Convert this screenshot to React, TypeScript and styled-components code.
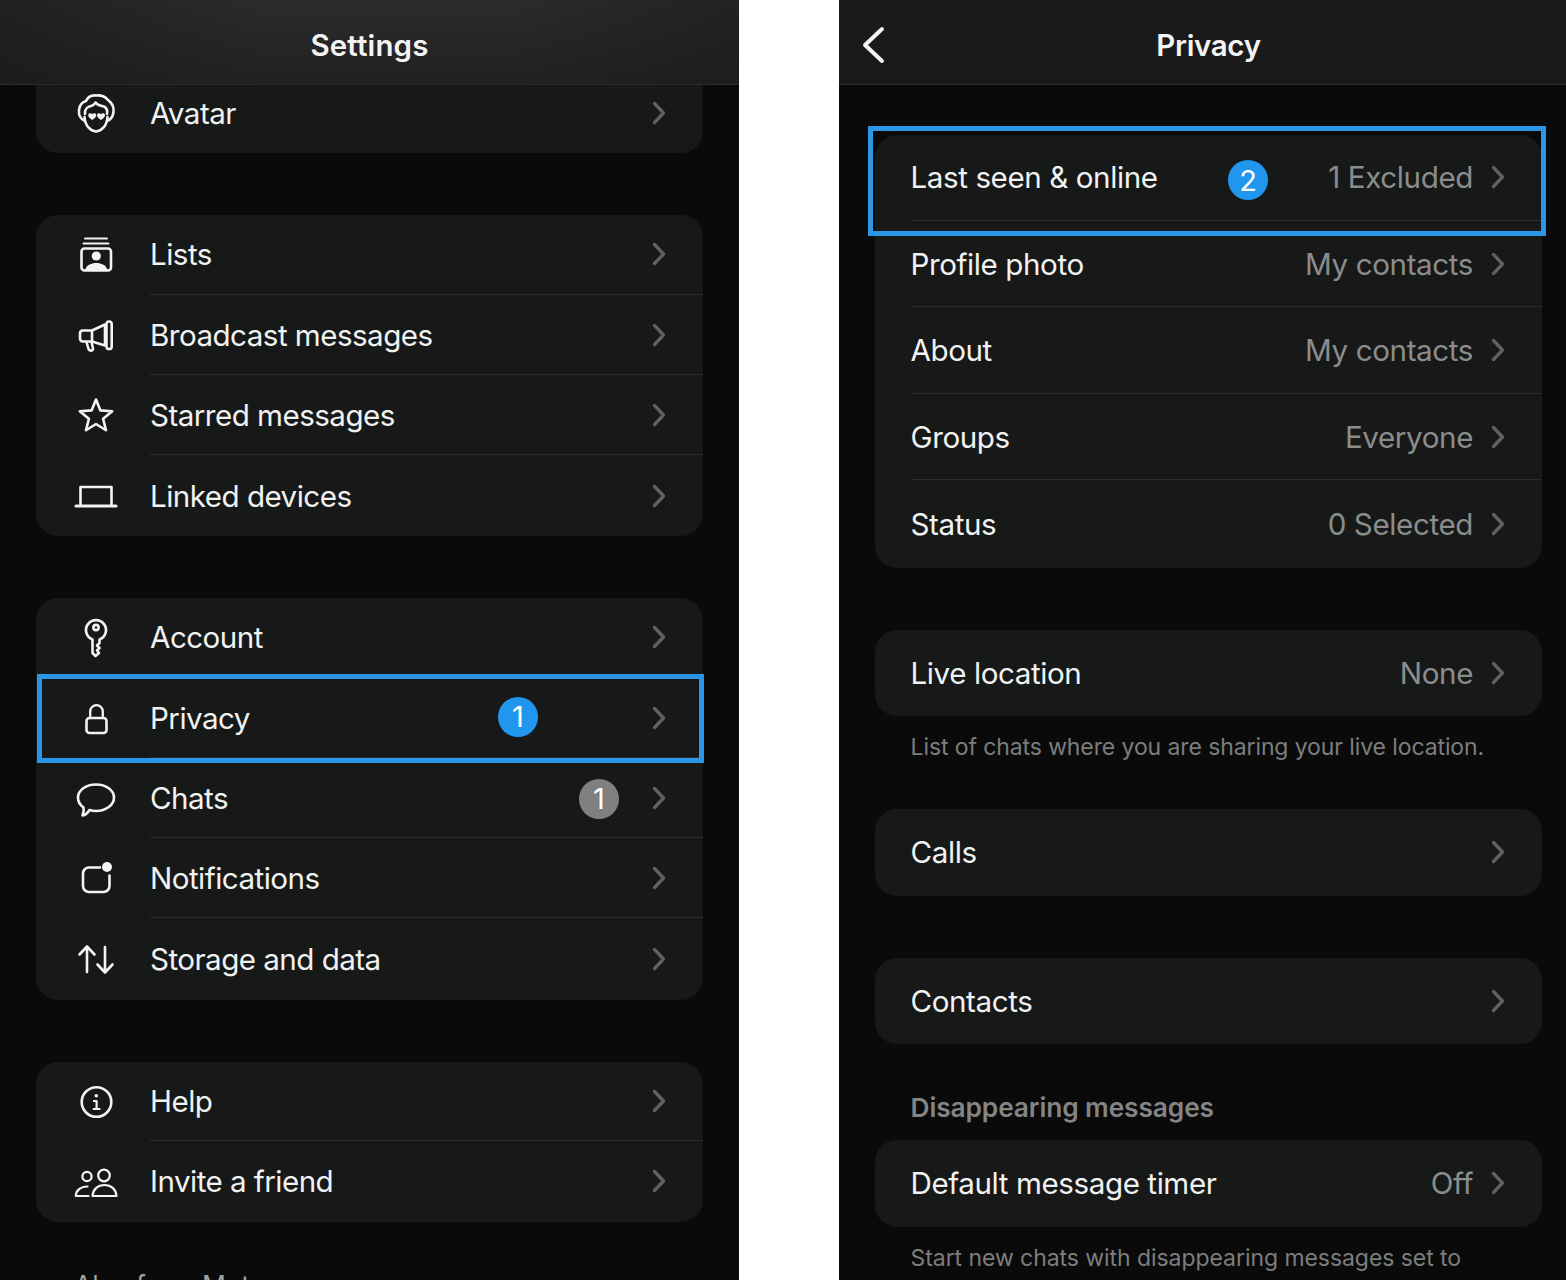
import React from "react"
import styled, { createGlobalStyle } from "styled-components"

const GlobalStyle = createGlobalStyle`
  html, body {
    margin: 0;
    padding: 0;
    background: #ffffff;
  }
  body {
    font-family: "Inter", "Liberation Sans", sans-serif;
    -webkit-font-smoothing: antialiased;
  }
`

const Page = styled.div`
  display: flex;
  gap: 100px;
  width: 1566px;
  height: 1280px;
  overflow: hidden;
  background: #ffffff;
`

const Phone = styled.section`
  display: flex;
  flex-direction: column;
  flex: 0 0 739px;
  height: 1280px;
  overflow: hidden;
  background: #0a0a0a;
`

const Header = styled.header<{ $glow?: boolean }>`
  display: grid;
  grid-template-columns: 1fr auto 1fr;
  align-items: center;
  flex: 0 0 85px;
  box-sizing: border-box;
  padding-top: 5px;
  border-bottom: 1px solid #2a2b2b;
  background: ${(p) =>
    p.$glow
      ? "linear-gradient(90deg, rgba(24,24,24,0.55), rgba(24,24,24,0) 35%, rgba(24,24,24,0) 70%, rgba(24,24,24,0.45)), linear-gradient(180deg, #2b2b2b, #212121)"
      : "#1a1a1a"};
`

const Title = styled.h1<{ $spacing: number }>`
  grid-column: 2;
  margin: 0;
  font-size: 29.5px;
  font-weight: 600;
  letter-spacing: ${(p) => p.$spacing}px;
  color: #f4f4f4;
`

const BackButton = styled.button`
  grid-column: 1;
  justify-self: start;
  display: flex;
  margin: 0 0 0 22px;
  padding: 0;
  border: none;
  background: none;
`

const Scroll = styled.div`
  flex: 1;
  min-height: 0;
  overflow: hidden;
`

const ScrollInner = styled.div<{ $offset: number }>`
  display: flex;
  flex-direction: column;
  margin-top: ${(p) => p.$offset}px;
  padding: 0 36px;
`

const Card = styled.div<{ $clipped?: boolean; $gap?: number }>`
  border-radius: 22px;
  background: #171919;
  padding-top: ${(p) => (p.$clipped ? 28 : 0)}px;
  margin-bottom: ${(p) => p.$gap ?? 62}px;
`

const Row = styled.div<{ $height: number }>`
  position: relative;
  display: flex;
  align-items: stretch;
  height: ${(p) => p.$height}px;
`

const IconSlot = styled.div`
  flex: 0 0 114px;
  display: flex;
  align-items: center;
  padding-left: 38px;
  box-sizing: border-box;
`

const RowBody = styled.div<{ $line: boolean; $inset?: boolean }>`
  flex: 1;
  display: flex;
  align-items: center;
  min-width: 0;
  margin-left: ${(p) => (p.$inset ? 35.5 : 0)}px;
  margin-bottom: 1px;
  padding-right: 37px;
  border-bottom: ${(p) => (p.$line ? "1px solid #2c2e2e" : "none")};
`

const Label = styled.span<{ $spacing: number }>`
  font-size: 29.6px;
  font-weight: 400;
  letter-spacing: ${(p) => p.$spacing}px;
  color: #f1f2f2;
`

const Value = styled.span`
  margin-left: auto;
  margin-right: 18px;
  font-size: 29.6px;
  letter-spacing: -0.4px;
  color: #8b8d8d;
`

const ChevronWrap = styled.span<{ $alone: boolean }>`
  display: flex;
  margin-left: ${(p) => (p.$alone ? "auto" : "0")};
`

const Badge = styled.span<{ $right: number; $gray?: boolean; $dy?: number }>`
  position: absolute;
  right: ${(p) => p.$right}px;
  top: calc(50% - 20px + ${(p) => p.$dy ?? 0}px);
  display: flex;
  align-items: center;
  justify-content: center;
  width: 40px;
  height: 40px;
  border-radius: 50%;
  font-size: 29px;
  font-weight: 400;
  color: #ffffff;
  background: ${(p) => (p.$gray ? "#808080" : "#2196ee")};
`

const Highlight = styled.div<{ $inset: string }>`
  position: absolute;
  inset: ${(p) => p.$inset};
  border: 5px solid #2b96e8;
  pointer-events: none;
`

const Footnote = styled.p<{ $spacing: number }>`
  margin: 0;
  padding: 16px 0 0 35.5px;
  height: 77px;
  font-size: 23px;
  line-height: 30px;
  white-space: nowrap;
  letter-spacing: ${(p) => p.$spacing}px;
  color: #7c7e7e;
`

const SectionTitle = styled.h2`
  margin: 0;
  padding: 47px 36px 0 35.5px;
  height: 96px;
  box-sizing: border-box;
  font-size: 26.3px;
  line-height: 34px;
  font-weight: 600;
  letter-spacing: -0.1px;
  color: #838585;
`

const LeftCaption = styled.p`
  margin: -15px 0 0;
  padding-left: 38px;
  font-size: 26.5px;
  line-height: 32px;
  color: #a0a2a2;
`

const Glyph = styled.svg`
  display: block;
  fill: none;
  stroke: #f2f3f3;
  stroke-width: 2.6;
  stroke-linecap: round;
  stroke-linejoin: round;
`

const Icon = ({ children }: { children: React.ReactNode }) => (
  <Glyph width="44" height="44" viewBox="0 0 44 44">
    {children}
  </Glyph>
)

const icons: Record<string, React.ReactNode> = {
  avatar: (
    <Icon>
      <path d="M10.5 26C11 35 16.5 40 22 40.5C27.5 40 33 35 33.5 26" />
      <path d="M11 30C6 28 4.5 24 5 19C5.5 14 8.5 11 12 10C14 6 18 4 22 4.5C26 4 31 5.5 34 9C38 12 40 17 39.5 21C39 25 37 28.5 33 30" />
      <path d="M11 23C10.5 18 14 15.5 17 15C19 14.5 20.5 13.5 21.5 11.5C23 14 27 15 30 15.5C32 16.5 33.8 19 33 23" />
      <path
        d="M18.3 23.2C17.2 21.6 14.2 22 14.2 24.2C14.2 26.2 16.6 27.8 18.3 29C20 27.8 22.2 26.2 22.2 24.2C22.2 22 19.4 21.6 18.3 23.2ZM27 23.2C26 21.6 23.2 22 23 24.2C23 26.2 25.2 27.8 27 29C28.7 27.8 31 26.2 31 24.2C31 22 28 21.6 27 23.2Z"
        fill="#f2f3f3"
        stroke="none"
      />
    </Icon>
  ),
  lists: (
    <Icon>
      <path d="M11 5.5H33M9.5 10.5H34.5" strokeWidth="2" />
      <rect x="7.5" y="15.5" width="29.5" height="22" rx="3" />
      <circle cx="22.3" cy="23" r="4.6" fill="#f2f3f3" stroke="none" />
      <path d="M11 37C12.5 32 17 30 22.3 30C27.5 30 32 32 33.5 37Z" fill="#f2f3f3" stroke="none" />
    </Icon>
  ),
  megaphone: (
    <Icon>
      <path d="M9 16.5H18L31 10.5V31.5L18 27.5H9C7 27.5 6 26 6 24.5V19.5C6 17.5 7 16.5 9 16.5Z" />
      <path d="M18 16.5V27.5" />
      <rect x="32.5" y="7.5" width="5.2" height="27.5" rx="2.6" />
      <path d="M12.5 28L14.5 35C15.5 37.5 19.5 37 19 34.5L17.5 28" />
    </Icon>
  ),
  star: (
    <Icon>
      <path d="M22 5.5L26.4 16.4L38.2 17.25L29.1 24.8L32 36.25L22 30L12 36.25L14.9 24.8L5.8 17.25L17.6 16.4Z" />
    </Icon>
  ),
  laptop: (
    <Icon>
      <path d="M6.5 30.5V13H37.5V30.5" />
      <path d="M2 32H42" strokeWidth="3.2" />
    </Icon>
  ),
  key: (
    <Icon>
      <path d="M18.5 23.5A10 10 0 1 1 25.5 23.5V27L23 29.5L25.5 32L23 34.5L25 37L21.5 40L18.5 37Z" />
      <circle cx="22" cy="11.5" r="2.6" />
    </Icon>
  ),
  lock: (
    <Icon>
      <rect x="12.5" y="21" width="20" height="15" rx="3" />
      <path d="M16.2 21V14.5A6.3 6.3 0 0 1 28.8 14.5V21" strokeWidth="2.3" />
    </Icon>
  ),
  chat: (
    <Icon>
      <path d="M22 7.5C32 7.5 40 13 40 20.5C40 28 32 34 22 34C19.5 34 17.5 33.7 15.5 33C14 35.5 11.5 38 8.5 38.5C9.5 36 10 33 9.5 30.5C6 28 4 24.5 4 20.5C4 13 12 7.5 22 7.5Z" />
    </Icon>
  ),
  bell: (
    <Icon>
      <path d="M26 10.5H15A6 6 0 0 0 9 16.5V29A6 6 0 0 0 15 35H29.5A6 6 0 0 0 35.5 29V18.5" />
      <circle cx="33" cy="10" r="5" fill="#f2f3f3" stroke="none" />
    </Icon>
  ),
  arrows: (
    <Icon>
      <path d="M13 10V35M5.5 17.5L13 9.5L20.5 17.5" />
      <path d="M31 10V35M23.5 27.5L31 35.5L38.5 27.5" />
    </Icon>
  ),
  info: (
    <Icon>
      <circle cx="22.5" cy="22" r="14.8" />
      <circle cx="22.3" cy="15.8" r="1.8" fill="#f2f3f3" stroke="none" />
      <path d="M19 21H22.6V29M18.8 29H26.4" strokeWidth="2.2" strokeLinecap="butt" />
    </Icon>
  ),
  users: (
    <Icon>
      <circle cx="13" cy="16.5" r="4.6" strokeWidth="2.2" />
      <circle cx="30" cy="15.5" r="5.8" strokeWidth="2.2" />
      <path d="M18.5 36C19 29 24 25 30.5 25C37 25 42 29 42.5 36Z" strokeWidth="2.2" />
      <path d="M14.5 36H1.8C2 30.5 6.5 26.5 13.5 26.5" strokeWidth="2.2" />
    </Icon>
  ),
}

const Chevron = () => (
  <svg width="14" height="24" viewBox="0 0 14 24" fill="none">
    <path
      d="M2.5 2.5L11.5 12L2.5 21.5"
      stroke="#606262"
      strokeWidth="3.3"
      strokeLinecap="round"
      strokeLinejoin="round"
    />
  </svg>
)

const LEFT_ROW = 80.25
const RIGHT_ROW = 86.55
const LEFT_SPACING = -0.54
const RIGHT_SPACING = -0.42

interface Item {
  label: string
  icon?: string
  value?: string
  badge?: React.ReactNode
  mark?: string
}

const Rows = ({ items, height, spacing }: { items: Item[]; height: number; spacing: number }) => (
  <>
    {items.map((item, i) => (
      <Row key={item.label} $height={height}>
        {item.icon && <IconSlot>{icons[item.icon]}</IconSlot>}
        <RowBody $line={i < items.length - 1} $inset={!item.icon}>
          <Label $spacing={spacing}>{item.label}</Label>
          {item.value && <Value>{item.value}</Value>}
          <ChevronWrap $alone={!item.value}>
            <Chevron />
          </ChevronWrap>
        </RowBody>
        {item.badge}
        {item.mark && <Highlight $inset={item.mark} />}
      </Row>
    ))}
  </>
)

const settingsGroups: Item[][] = [
  [
    { label: "Lists", icon: "lists" },
    { label: "Broadcast messages", icon: "megaphone" },
    { label: "Starred messages", icon: "star" },
    { label: "Linked devices", icon: "laptop" },
  ],
  [
    { label: "Account", icon: "key" },
    {
      label: "Privacy",
      icon: "lock",
      badge: <Badge $right={165} $dy={-2}>1</Badge>,
      mark: "-5px -1px -4px 1px",
    },
    { label: "Chats", icon: "chat", badge: <Badge $right={84} $gray>1</Badge> },
    { label: "Notifications", icon: "bell" },
    { label: "Storage and data", icon: "arrows" },
  ],
  [
    { label: "Help", icon: "info" },
    { label: "Invite a friend", icon: "users" },
  ],
]

const privacyRows: Item[] = [
  {
    label: "Last seen & online",
    value: "1 Excluded",
    badge: <Badge $right={274} $dy={2}>2</Badge>,
    mark: "-9px -4px -14px -7px",
  },
  { label: "Profile photo", value: "My contacts" },
  { label: "About", value: "My contacts" },
  { label: "Groups", value: "Everyone" },
  { label: "Status", value: "0 Selected" },
]

export default function App() {
  return (
    <Page>
      <GlobalStyle />
      <Phone>
        <Header $glow>
          <Title $spacing={0.15}>Settings</Title>
        </Header>
        <Scroll>
          <ScrollInner $offset={-40}>
            <Card $clipped>
              <Rows items={[{ label: "Avatar", icon: "avatar" }]} height={LEFT_ROW} spacing={LEFT_SPACING} />
            </Card>
            {settingsGroups.map((group) => (
              <Card key={group[0].label}>
                <Rows items={group} height={LEFT_ROW} spacing={LEFT_SPACING} />
              </Card>
            ))}
            <LeftCaption>Also from Meta</LeftCaption>
          </ScrollInner>
        </Scroll>
      </Phone>

      <Phone>
        <Header>
          <BackButton aria-label="Back">
            <svg width="24" height="38" viewBox="0 0 24 38" fill="none">
              <path
                d="M21 3L4 19L21 35"
                stroke="#f4f4f4"
                strokeWidth="4"
                strokeLinecap="round"
                strokeLinejoin="round"
              />
            </svg>
          </BackButton>
          <Title $spacing={-0.35}>Privacy</Title>
        </Header>
        <Scroll>
          <ScrollInner $offset={50}>
            <Card>
              <Rows items={privacyRows} height={RIGHT_ROW} spacing={RIGHT_SPACING} />
            </Card>
            <Card $gap={0}>
              <Rows items={[{ label: "Live location", value: "None" }]} height={RIGHT_ROW} spacing={RIGHT_SPACING} />
            </Card>
            <Footnote $spacing={-0.1}>List of chats where you are sharing your live location.</Footnote>
            <Card>
              <Rows items={[{ label: "Calls" }]} height={RIGHT_ROW} spacing={RIGHT_SPACING} />
            </Card>
            <Card $gap={0}>
              <Rows items={[{ label: "Contacts" }]} height={RIGHT_ROW} spacing={RIGHT_SPACING} />
            </Card>
            <SectionTitle>Disappearing messages</SectionTitle>
            <Card $gap={0}>
              <Rows items={[{ label: "Default message timer", value: "Off" }]} height={RIGHT_ROW} spacing={RIGHT_SPACING} />
            </Card>
            <Footnote $spacing={-0.06}>Start new chats with disappearing messages set to</Footnote>
          </ScrollInner>
        </Scroll>
      </Phone>
    </Page>
  )
}
